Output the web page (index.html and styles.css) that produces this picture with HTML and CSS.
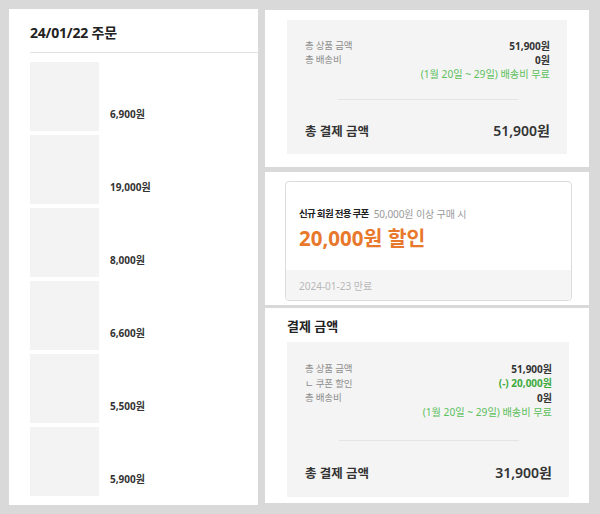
FILE: index.html
```html
<!DOCTYPE html>
<html lang="ko">
<head>
<meta charset="utf-8">
<link rel="stylesheet" href="styles.css">
</head>
<body>
<div class="page">
  <section class="orders">
    <div class="orders-head"><h1>24/01/22 주문</h1></div>
    <ul class="items">
      <li class="item"><div class="thumb"></div><span class="price">6,900원</span></li>
      <li class="item"><div class="thumb"></div><span class="price">19,000원</span></li>
      <li class="item"><div class="thumb"></div><span class="price">8,000원</span></li>
      <li class="item"><div class="thumb"></div><span class="price">6,600원</span></li>
      <li class="item"><div class="thumb"></div><span class="price">5,500원</span></li>
      <li class="item"><div class="thumb"></div><span class="price">5,900원</span></li>
    </ul>
  </section>
  <div class="side">
    <section class="panel panel-sum">
      <div class="summary">
        <div class="rows">
          <div class="row"><span class="label">총 상품 금액</span><span class="value">51,900원</span></div>
          <div class="row"><span class="label">총 배송비</span><span class="value">0원</span></div>
          <div class="row note"><span>(1월 20일 ~ 29일) 배송비 무료</span></div>
        </div>
        <hr class="divider">
        <div class="total"><span class="total-label">총 결제 금액</span><span class="total-value">51,900원</span></div>
      </div>
    </section>
    <section class="panel panel-coupon">
      <div class="coupon">
        <div class="coupon-body">
          <div class="coupon-title"><strong>신규 회원 전용 쿠폰</strong><span>50,000원 이상 구매 시</span></div>
          <div class="coupon-amount">20,000원 할인</div>
        </div>
        <div class="coupon-foot">2024-01-23 만료</div>
      </div>
    </section>
    <section class="panel panel-pay">
      <h2>결제 금액</h2>
      <div class="summary summary-pay">
        <div class="rows">
          <div class="row"><span class="label">총 상품 금액</span><span class="value">51,900원</span></div>
          <div class="row"><span class="label">ㄴ 쿠폰 할인</span><span class="value discount">(-) 20,000원</span></div>
          <div class="row"><span class="label">총 배송비</span><span class="value">0원</span></div>
          <div class="row note"><span>(1월 20일 ~ 29일) 배송비 무료</span></div>
        </div>
        <hr class="divider">
        <div class="total"><span class="total-label">총 결제 금액</span><span class="total-value">31,900원</span></div>
      </div>
    </section>
  </div>
</div>
</body>
</html>
```

FILE: styles.css
```css
* { box-sizing: border-box; }
html, body { margin: 0; padding: 0; }
body {
  background: #d9d9d9;
  font-family: "Noto Sans", "Noto Sans CJK KR", sans-serif;
  color: #333;
  width: 600px;
  height: 514px;
  overflow: hidden;
}
.page {
  display: flex;
  align-items: flex-start;
  gap: 7px;
  padding: 9px 0 0 9px;
}
.orders {
  width: 249px;
  height: 496px;
  background: #fff;
}
.orders-head {
  margin-left: 21px;
  padding-top: 14px;
  height: 44px;
  border-bottom: 1px solid #e2e2e2;
}
.orders-head h1 {
  margin: 0;
  font-size: 14px;
  line-height: 20px;
  font-weight: 700;
  color: #222;
  letter-spacing: -0.2px;
}
.items {
  list-style: none;
  margin: 9px 0 0 21px;
  padding: 0;
  display: flex;
  flex-direction: column;
  gap: 4px;
}
.item {
  display: flex;
  align-items: flex-end;
  gap: 11px;
}
.thumb {
  width: 69px;
  height: 69px;
  background: #f3f3f3;
  flex: none;
}
.price {
  font-size: 10px;
  line-height: 14px;
  font-weight: 700;
  color: #333;
  margin-bottom: 10px;
}
.side {
  margin-top: 1px;
  width: 324px;
  display: flex;
  flex-direction: column;
}
.panel { background: #fff; }
.panel-sum { padding: 10px 22px 13px 22px; height: 157px; }
.summary {
  background: #f4f4f4;
  padding: 18px 17px 14px 18px;
  display: flex;
  flex-direction: column;
}
.rows { display: flex; flex-direction: column; }
.row {
  display: flex;
  justify-content: space-between;
  align-items: center;
  height: 14px;
}
.label { font-size: 9.5px; color: #8e8e8e; letter-spacing: -0.2px; }
.value { font-size: 10px; font-weight: 700; color: #333; }
.value.discount { color: #3daa3d; }
.note { justify-content: flex-end; font-size: 10.2px; color: #5cbf5c; }
.divider {
  border: 0;
  height: 1px;
  background: #e4e4e4;
  width: 180px;
  margin: 19px auto 20px;
}
.total {
  display: flex;
  justify-content: space-between;
  align-items: center;
  height: 20px;
}
.total-label { font-size: 12.5px; font-weight: 700; color: #333; }
.total-value { font-size: 14px; font-weight: 600; color: #333; }
.panel-coupon {
  margin-top: 5px;
  height: 133px;
  padding: 9px 17px 5px 20px;
}
.coupon {
  border: 1px solid #dcdcdc;
  border-radius: 4px;
  overflow: hidden;
  background: #fff;
}
.coupon-body { padding: 24px 13px 0; height: 88px; }
.coupon-title {
  display: flex;
  align-items: center;
  gap: 5px;
  height: 14px;
}
.coupon-title strong { font-size: 9.5px; font-weight: 700; color: #222; letter-spacing: -0.7px; }
.coupon-title span { font-size: 10px; color: #9a9a9a; letter-spacing: -0.1px; }
.coupon-amount {
  margin-top: 5px;
  font-size: 20.5px;
  line-height: 26px;
  font-weight: 700;
  color: #e8782c;
}
.coupon-foot {
  background: #f5f5f5;
  height: 30px;
  padding: 0 13px;
  display: flex;
  align-items: center;
  font-size: 10px;
  color: #b8b8b8;
}
.panel-pay {
  margin-top: 3px;
  height: 195px;
  padding: 9px 20px 6px 22px;
}
.panel-pay h2 {
  margin: 0 0 7px;
  font-size: 13px;
  line-height: 18px;
  font-weight: 700;
  color: #222;
}
.summary-pay { padding: 19px 17px 15px 18px; }
.summary-pay .row { height: 14.5px; }
.summary-pay .divider { margin: 21px auto 21px; }
```
